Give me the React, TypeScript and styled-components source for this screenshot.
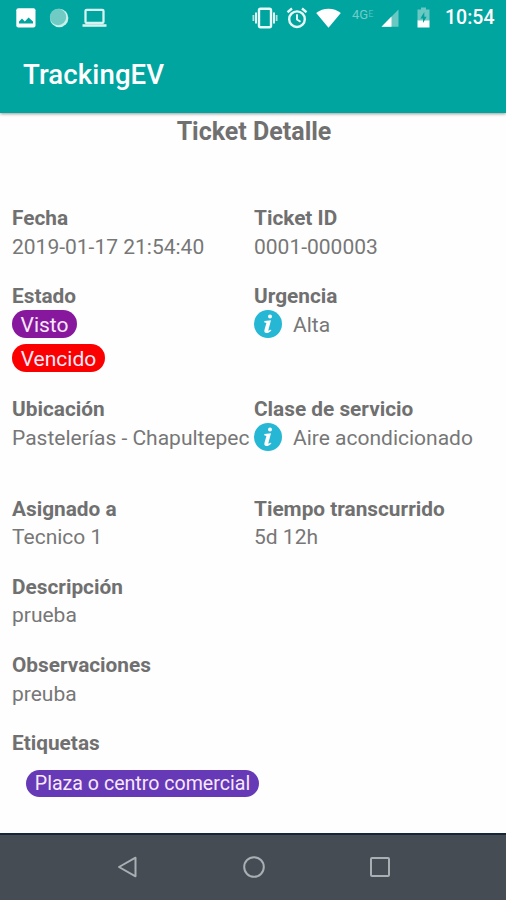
import React from "react";
import styled, { createGlobalStyle } from "styled-components";

const GlobalStyle = createGlobalStyle`
  * { box-sizing: border-box; }
  body { margin: 0; background: #fefefe; font-family: Roboto, "Liberation Sans", sans-serif; }
`;

const Screen = styled.div`
  display: flex;
  flex-direction: column;
  height: 900px;
  overflow: hidden;
  background: #fefefe;
`;

const Header = styled.header`
  flex: none;
  height: 113px;
  background: #00a5a0;
  color: #fff;
  box-shadow: 0 1px 3px rgba(0, 0, 0, 0.4);
`;

const StatusBar = styled.div`
  display: flex;
  align-items: center;
  justify-content: space-between;
  height: 35px;
  padding: 0 11px 0 16px;
`;

const StatusGroup = styled.div<{ $gap: number }>`
  display: flex;
  align-items: center;
  gap: ${(p) => p.$gap}px;
  svg { display: block; flex: none; }
`;

const NetworkLabel = styled.span`
  width: 21px;
  margin: 0 0 7px 3px;
  font-size: 13px;
  line-height: 14px;
  white-space: nowrap;
  color: rgba(255, 255, 255, 0.45);
  small { font-size: 9px; vertical-align: 2px; opacity: 0.7; }
`;

const Clock = styled.time`
  width: 50px;
  margin: 1px 0 0 7px;
  font-size: 19.5px;
  font-weight: 500;
  line-height: 24px;
  white-space: nowrap;
`;

const AppTitle = styled.h1`
  margin: 22px 0 0 23px;
  font-size: 27.6px;
  line-height: 36px;
  font-weight: 500;
  letter-spacing: 0.1px;
`;

const Content = styled.main`
  flex: 1;
  min-height: 0;
  color: #707070;
`;

const PageTitle = styled.h2`
  margin: 3px 0 57px;
  padding-left: 2px;
  font-size: 25px;
  line-height: 31px;
  font-weight: 700;
  text-align: center;
`;

const Row = styled.section<{ $height: number }>`
  display: grid;
  grid-template-columns: 242px 1fr;
  height: ${(p) => p.$height}px;
  padding-left: 12px;
  align-content: start;
`;

const Field = styled.div`
  font-size: 21px;
  line-height: 28.5px;
  white-space: nowrap;
`;

const Label = styled.h3`
  margin: 0;
  height: 28px;
  font-size: 20.8px;
  font-weight: 700;
`;

const Value = styled.div`
  display: flex;
  align-items: center;
  height: 30px;
  font-weight: 400;
  color: #777;
  svg { flex: none; margin: -2px 11px 0 0; }
`;

const Pill = styled.span<{ $color: string; $width: number; $height?: number; $fontSize?: number }>`
  display: flex;
  align-items: center;
  justify-content: center;
  width: ${(p) => p.$width}px;
  height: ${(p) => p.$height ?? 28}px;
  padding-top: 2px;
  border-radius: 14px;
  background: ${(p) => p.$color};
  color: #f8e8fb;
  font-size: ${(p) => p.$fontSize ?? 21}px;
`;

const PillStack = styled.div`
  display: flex;
  flex-direction: column;
  gap: 6px;
`;

const TagList = styled.div`
  padding: 13px 0 0 14px;
`;

const NavBar = styled.nav`
  display: flex;
  flex: none;
  justify-content: space-between;
  align-items: center;
  height: 67px;
  padding: 0 114px 1px 116px;
  border-top: 2px solid #142638;
  background: #454c53;
`;

const PictureIcon = () => (
  <svg width="20" height="20" viewBox="0 0 20 20">
    <rect x="0.3" y="0.3" width="19.2" height="19.2" rx="2" fill="#fff" />
    <path d="M3 15.5V13.5L6 10.6 8.8 13.5 12.6 9.5 17 13.5V15.5Z" fill="#00a5a0" />
  </svg>
);

const SyncIcon = () => (
  <svg width="20" height="20" viewBox="0 0 20 20">
    <circle cx="10.2" cy="10" r="9.2" fill="#c9f0eb" />
    <circle cx="9" cy="9" r="8.2" fill="#6fcbc3" />
  </svg>
);

const LaptopIcon = () => (
  <svg width="25" height="20" viewBox="0 0 25 20">
    <rect x="3.5" y="1.8" width="18" height="13.2" rx="1.2" fill="none" stroke="#d5f3f0" strokeWidth="2.3" />
    <path d="M0.5 16.2H24.5V18.8H0.5Z" fill="#d5f3f0" />
  </svg>
);

const VibrateIcon = () => (
  <svg width="26" height="22" viewBox="0 0 26 22" fill="none" stroke="#e8faf8">
    <rect x="7" y="1.8" width="12" height="18.4" rx="1.5" strokeWidth="2.4" />
    <path d="M4 5.5V16.5M22 5.5V16.5" strokeWidth="2" />
    <path d="M1.4 8V14M24.6 8V14" strokeWidth="1.8" opacity="0.75" />
  </svg>
);

const AlarmIcon = () => (
  <svg width="22" height="22" viewBox="0 0 22 22" fill="none" stroke="#e8faf8" strokeWidth="2.4">
    <circle cx="11" cy="12.2" r="7.8" />
    <path d="M1.5 5.2 6 1.5M16 1.5 20.5 5.2" />
    <path d="M11 7.2V12.5L14.5 14.8" strokeWidth="1.9" />
  </svg>
);

const WifiIcon = () => (
  <svg width="25" height="20" viewBox="0 0 25 20">
    <path d="M12.5 19.8 0.2 5C7-0.8 18-0.8 24.8 5Z" fill="#fff" />
  </svg>
);

const SignalIcon = () => (
  <svg width="18" height="18" viewBox="0 0 18 18">
    <path d="M0.5 17.7 17.5 0.5V17.7Z" fill="#6ac8c3" />
    <path d="M0.5 17.7 10.5 7.6V17.7Z" fill="#fff" />
  </svg>
);

const BatteryIcon = () => (
  <svg width="13" height="21" viewBox="0 0 13 21">
    <path d="M4 0.5H9V2.5H12.5V14H0.5V2.5H4Z" fill="#6ac8c3" />
    <path d="M0.5 13.5H12.5V20.5H0.5Z" fill="#fff" />
    <path d="M7.3 5 3.4 11.4H6V16L9.6 9.8H7.3Z" fill="#00a09b" />
  </svg>
);

const InfoIcon = () => (
  <svg width="28" height="28" viewBox="0 0 28 28">
    <circle cx="14" cy="14" r="14" fill="#25b7d3" />
    <circle cx="16" cy="6.5" r="2" fill="#fff" />
    <path
      d="M10.4 11 17 10.2 14.4 20.1C14.2 21.1 15.4 20.8 17 19.5L17.3 20.4C15.4 22.4 13.5 23.2 12 23 10.4 22.8 10.1 21.4 10.5 19.8L12.4 12.9 10.2 12.3Z"
      fill="#fff"
    />
  </svg>
);

const NavIcon = ({ shape }: { shape: "back" | "home" | "recent" }) => (
  <svg width="24" height="24" viewBox="0 0 24 24" fill="none" stroke="#a9afb3" strokeWidth="2">
    {shape === "back" && <path d="M19.5 2.7V21.3L3 12Z" strokeLinejoin="round" />}
    {shape === "home" && <circle cx="12" cy="12" r="9.8" />}
    {shape === "recent" && <rect x="3" y="3" width="18" height="18" rx="1" />}
  </svg>
);

export default function App() {
  return (
    <>
      <GlobalStyle />
      <Screen>
        <Header>
          <StatusBar>
            <StatusGroup $gap={13}>
              <PictureIcon />
              <SyncIcon />
              <LaptopIcon />
            </StatusGroup>
            <StatusGroup $gap={8}>
              <VibrateIcon />
              <AlarmIcon />
              <WifiIcon />
              <NetworkLabel>
                4G<small>E</small>
              </NetworkLabel>
              <StatusGroup $gap={18}>
                <SignalIcon />
                <BatteryIcon />
              </StatusGroup>
              <Clock>10:54</Clock>
            </StatusGroup>
          </StatusBar>
          <AppTitle>TrackingEV</AppTitle>
        </Header>
        <Content>
          <PageTitle>Ticket Detalle</PageTitle>
          <Row $height={78}>
            <Field>
              <Label>Fecha</Label>
              <Value>2019-01-17 21:54:40</Value>
            </Field>
            <Field>
              <Label>Ticket ID</Label>
              <Value>0001-000003</Value>
            </Field>
          </Row>
          <Row $height={113}>
            <Field>
              <Label>Estado</Label>
              <PillStack>
                <Pill $color="#87189d" $width={65}>Visto</Pill>
                <Pill $color="#fb0000" $width={93}>Vencido</Pill>
              </PillStack>
            </Field>
            <Field>
              <Label>Urgencia</Label>
              <Value>
                <InfoIcon />
                Alta
              </Value>
            </Field>
          </Row>
          <Row $height={99.5}>
            <Field>
              <Label>Ubicación</Label>
              <Value>Pastelerías - Chapultepec</Value>
            </Field>
            <Field>
              <Label>Clase de servicio</Label>
              <Value>
                <InfoIcon />
                Aire acondicionado
              </Value>
            </Field>
          </Row>
          <Row $height={78}>
            <Field>
              <Label>Asignado a</Label>
              <Value>Tecnico 1</Value>
            </Field>
            <Field>
              <Label>Tiempo transcurrido</Label>
              <Value>5d 12h</Value>
            </Field>
          </Row>
          <Row $height={78.5}>
            <Field>
              <Label>Descripción</Label>
              <Value>prueba</Value>
            </Field>
          </Row>
          <Row $height={78}>
            <Field>
              <Label>Observaciones</Label>
              <Value>preuba</Value>
            </Field>
          </Row>
          <Row $height={78}>
            <Field>
              <Label>Etiquetas</Label>
              <TagList>
                <Pill $color="#6639b7" $width={233} $height={27} $fontSize={19.6}>
                  Plaza o centro comercial
                </Pill>
              </TagList>
            </Field>
          </Row>
        </Content>
        <NavBar>
          <NavIcon shape="back" />
          <NavIcon shape="home" />
          <NavIcon shape="recent" />
        </NavBar>
      </Screen>
    </>
  );
}
